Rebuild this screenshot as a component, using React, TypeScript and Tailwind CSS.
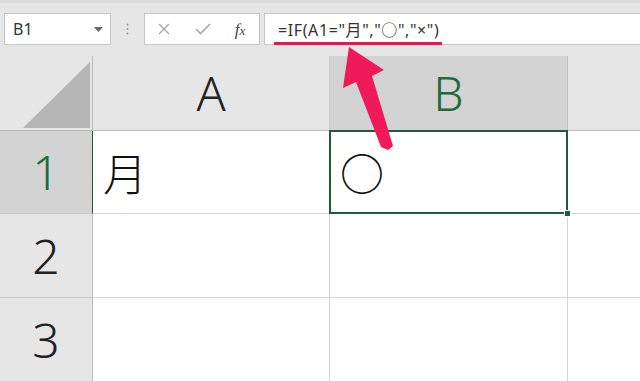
import React from "react";

const hdr = "flex items-center justify-center text-[48px] leading-none font-[300]";
const font = { fontFamily: '"Noto Sans", "Noto Sans CJK JP", sans-serif' } as React.CSSProperties;
const jp = { fontFamily: '"Noto Sans CJK JP", "Noto Sans", sans-serif' } as React.CSSProperties;
const formula = { fontFamily: '"Noto Sans", "Noto Sans CJK JP", sans-serif' } as React.CSSProperties;

export default function App() {
  return (
    <div className="relative w-[640px] h-[381px] overflow-hidden bg-[#e6e6e6]" style={font}>
      {/* Toolbar */}
      <div className="h-[56px] flex items-start pt-[13px] border-t-[3px] border-[#dcdcdc]">
        <div className="ml-[4px] w-[107px] h-[32px] -mt-[3px] bg-white border border-[#c6c6c6] flex items-center justify-between pl-[8px] pr-[7px]">
          <span className="text-[16px] text-[#333]">B1</span>
          <svg width="9" height="5" viewBox="0 0 9 5"><path d="M0 0h9L4.5 5z" fill="#666" /></svg>
        </div>
        <div className="w-[33px] h-[32px] -mt-[3px] flex items-center justify-center">
          <svg width="3" height="12" viewBox="0 0 3 12">
            <circle cx="1.5" cy="1.5" r="1" fill="#9a9a9a" />
            <circle cx="1.5" cy="6" r="1" fill="#9a9a9a" />
            <circle cx="1.5" cy="10.5" r="1" fill="#9a9a9a" />
          </svg>
        </div>
        <div className="w-[116px] h-[32px] -mt-[3px] bg-white border border-[#c6c6c6] flex items-center">
          <div className="w-[38px] flex justify-center">
            <svg width="12" height="12" viewBox="0 0 12 12"><path d="M1 1L11 11M11 1L1 11" stroke="#a8a8a8" strokeWidth="1.4" /></svg>
          </div>
          <div className="w-[40px] flex justify-center">
            <svg width="16" height="12" viewBox="0 0 16 12"><path d="M1 6L5.5 10.5L15 1" stroke="#a8a8a8" strokeWidth="1.6" fill="none" /></svg>
          </div>
          <div className="flex-1 flex justify-center pr-[2px]">
            <span className="italic text-[17px] leading-none text-[#444]" style={{ fontFamily: '"Liberation Serif", serif' }}>f<span className="text-[13px]">x</span></span>
          </div>
        </div>
        <div className="ml-[4px] flex-1 h-[32px] -mt-[3px] bg-white border border-[#c6c6c6] border-r-0 flex items-center pl-[13px]">
          <span className="text-[16px] text-[#333] leading-none tracking-[0.6px]" style={formula}>=IF(A1="<span style={jp}>月</span>","<span style={jp}>○</span>","×")</span>
        </div>
      </div>

      {/* Grid */}
      <div className="grid grid-cols-[93px_237px_238px_1fr] grid-rows-[75px_83px_84px_1fr] h-[325px]">
        <div className="relative bg-[#e6e6e6] border-r border-b border-[#bcbcbc]">
          <svg className="absolute left-0 top-0" width="93" height="75" viewBox="0 0 93 75">
            <path d="M23 72H90V6z" fill="#b5b5b5" />
          </svg>
        </div>
        <div className={`${hdr} bg-[#e6e6e6] border-r border-b border-[#c8c8c8] border-b-[#bcbcbc] text-[#222]`}>A</div>
        <div className={`${hdr} bg-[#d3d3d3] border-r border-b border-[#c0c0c0] border-b-[#1e5b36] text-[#1e6b3d]`}>B</div>
        <div className="bg-[#e6e6e6] border-b border-[#bcbcbc]"></div>

        <div className={`${hdr} bg-[#d3d3d3] border-r border-b border-[#c8c8c8] border-r-[#1e5b36] text-[#1e6b3d]`}>1</div>
        <div className="bg-white border-r border-b border-[#d4d4d4] flex items-center pl-[10px]">
          <span className="text-[44px] leading-none text-[#111] font-[300]" style={jp}>月</span>
        </div>
        <div className="relative bg-white border-r border-b border-[#d4d4d4] flex items-center pl-[10px]">
          <span className="text-[44px] leading-none text-[#111]" style={jp}>○</span>
          <div className="absolute -left-[1px] -top-[1px] -right-[1px] -bottom-[1px] border-2 border-[#1e5b36]"></div>
          <div className="absolute -right-[4px] -bottom-[4px] w-[7px] h-[7px] bg-[#1e5b36] border border-white"></div>
        </div>
        <div className="bg-white border-b border-[#d4d4d4]"></div>

        <div className={`${hdr} bg-[#e6e6e6] border-r border-b border-[#c8c8c8] border-r-[#bcbcbc] text-[#222]`}>2</div>
        <div className="bg-white border-r border-b border-[#d4d4d4]"></div>
        <div className="bg-white border-r border-b border-[#d4d4d4]"></div>
        <div className="bg-white border-b border-[#d4d4d4]"></div>

        <div className={`${hdr} bg-[#e6e6e6] border-r border-[#bcbcbc] text-[#222]`}>3</div>
        <div className="bg-white border-r border-[#d4d4d4]"></div>
        <div className="bg-white border-r border-[#d4d4d4]"></div>
        <div className="bg-white"></div>
      </div>

      {/* Annotation overlay */}
      <div className="absolute left-[274px] top-[42px] w-[168px] h-[3px] bg-[#ea1652]"></div>
      <svg className="absolute left-0 top-0 pointer-events-none" width="640" height="381" viewBox="0 0 640 381">
        <path d="M349 47L384 70L372 76L393 146L388 150L381 147L356 82L343 88Z" fill="#f0195a" />
      </svg>
    </div>
  );
}
